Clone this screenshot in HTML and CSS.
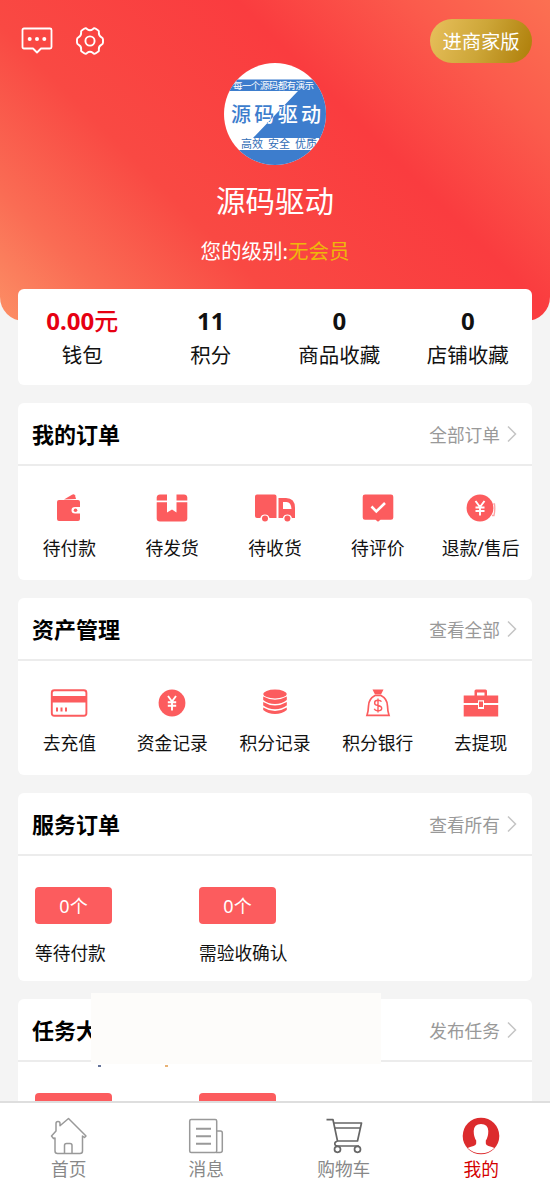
FILE: index.html
```html
<!DOCTYPE html>
<html lang="zh-CN">
<head>
<meta charset="utf-8">
<title>我的</title>
<link rel="stylesheet" href="styles.css">
</head>
<body>
<div class="screen">
  <header class="hero">
    <div class="topbar">
      <div class="tools">
        <svg width="32" height="28" viewBox="0 0 32 28" fill="none" stroke="#fff" stroke-width="1.8" stroke-linejoin="round"><path d="M3 1.500h26q1.500 0 1.500 1.500v17q0 1.500-1.500 1.500h-9l-4 4-4-4H3q-1.500 0-1.500-1.500V3Q1.500 1.500 3 1.500z"/><g fill="#fff" stroke="none"><circle cx="8.700" cy="12" r="2"/><circle cx="16" cy="12" r="2"/><circle cx="23.300" cy="12" r="2"/></g></svg>
        <svg width="28" height="28" viewBox="0 0 28 28" fill="none" stroke="#fff" stroke-width="1.900" stroke-linejoin="round"><path d="M8.600 1.500Q10 .8 11.200 2.200Q14 4.200 16.800 2.200Q18 .8 19.400 1.500L22 3.200Q23.300 4 22.800 5.800Q22.800 9 25.600 10.300Q27 11 27 12.500V15.500Q27 17 25.600 17.700Q22.800 19 22.800 22.200Q23.300 24 22 24.800L19.400 26.500Q18 27.200 16.800 25.800Q14 23.800 11.200 25.800Q10 27.200 8.600 26.500L6 24.800Q4.700 24 5.200 22.200Q5.200 19 2.400 17.700Q1 17 1 15.500V12.500Q1 11 2.400 10.300Q5.200 9 5.200 5.800Q4.700 4 6 3.200Z"/><circle cx="14" cy="14" r="4.600"/></svg>
      </div>
      <div class="merchant">进商家版</div>
    </div>
    <div class="avatar">
      <svg width="102" height="102" viewBox="0 0 102 102">
        <defs><clipPath id="dark"><path d="M74 28H102V75H29z"/></clipPath><clipPath id="light"><path d="M0 28H74L29 75H0z"/></clipPath></defs>
        <rect width="102" height="102" fill="#fff"/>
        <path d="M0 16.500H102V28H0zM74 28H102V75H29zM0 87H102V102H0zM95 75h7v13h-7z" fill="#3d7dcd"/>
        <g class="logo-text">
          <text x="9" y="26" font-size="9.500" textLength="81" fill="#fff">每一个源码都有演示</text>
          <g font-size="20" font-weight="500"><text x="7" y="59" textLength="90" fill="#3d7dcd" clip-path="url(#light)">源码驱动</text><text x="7" y="59" textLength="90" fill="#fff" clip-path="url(#dark)">源码驱动</text></g>
          <g font-size="11" fill="#2f6cb5"><text x="17" y="85">高效</text><text x="44" y="85">安全</text><text x="71" y="85">优质</text></g>
        </g>
      </svg>
    </div>
    <div class="name">源码驱动</div>
    <div class="level">您的级别:<span>无会员</span></div>
  </header>

  <main class="content">
    <section class="card stats">
      <div class="stat stat-money"><b>0.00<em>元</em></b><span>钱包</span></div>
      <div class="stat"><b>11</b><span>积分</span></div>
      <div class="stat"><b>0</b><span>商品收藏</span></div>
      <div class="stat"><b>0</b><span>店铺收藏</span></div>
    </section>

    <section class="card">
      <div class="card-head"><h2>我的订单</h2><a>全部订单<svg width="10" height="18" viewBox="0 0 10 18"><path d="M1 1.500L8.500 9L1 16.500"/></svg></a></div>
      <div class="grid">
        <div class="item"><svg width="26" height="30" viewBox="0 0 26 30"><path d="M8 6.500L16 1.700q2-1 3 .6l1 3.700z" fill="#fc5c5e"/><path d="M3 7H22q2 0 2 2v5h-5q-3.500 0-3.500 3.200t3.500 3.200h5V26q0 2-2 2H3Q1 28 1 26V9Q1 7 3 7z" fill="#fc5c5e"/><circle cx="19.500" cy="17.200" r="1.800" fill="#fc5c5e"/></svg><span>待付款</span></div>
        <div class="item"><svg width="32" height="30" viewBox="0 0 32 30"><path d="M4 1.500H11V7.500H.7V4.500Q1 1.500 4 1.500zM20.500 1.500H28Q31 1.500 31.300 4.500V7.500H20.500zM.7 9.200H11V19.500L16 16.500L20.500 19.500V9.200H31.300V25.500Q31.300 28.500 28 28.500H4Q.7 28.500 .7 25.500z" fill="#fc5c5e"/></svg><span>待发货</span></div>
        <div class="item"><svg width="42" height="30" viewBox="0 0 42 30"><path d="M3 1.500H20.500q2 0 2 2V25H15.500a4.800 4.800 0 0 0-9.200 0H3q-2 0-2-2V3.500q0-2 2-2zM24.500 5H32Q41 5 41 15V25H38a4.800 4.800 0 0 0-9.200 0H24.500z" fill="#fc5c5e"/><path d="M29 9H32.500Q37 9 37.500 16H29z" fill="#fff"/><circle cx="11" cy="25.500" r="3" fill="#fc5c5e"/><circle cx="33.400" cy="25.500" r="3" fill="#fc5c5e"/></svg><span>待收货</span></div>
        <div class="item"><svg width="32" height="30" viewBox="0 0 32 30"><path d="M3 1.500H29q2.300 0 2.300 2.300V24.500q0 2.300-2.300 2.300H18.500L16 28.800L13.500 26.800H3Q.7 26.800 .7 24.500V3.800Q.7 1.500 3 1.500z" fill="#fc5c5e"/><path d="M9.500 13.500L14.300 18.500L23 10" fill="none" stroke="#fff" stroke-width="2.600"/></svg><span>待评价</span></div>
        <div class="item"><svg width="32" height="30" viewBox="0 0 32 30"><path d="M28.300 11H29.500Q30.300 17 29 22.500H27" fill="none" stroke="#fda2a3" stroke-width="1.300"/><circle cx="15" cy="15" r="13.400" fill="#fc5c5e"/><path d="M10.500 8L15 14L19.500 8M15 14V22.500M10.500 14.500H19.500M10.500 18H19.500" fill="none" stroke="#fff" stroke-width="1.900"/></svg><span>退款/售后</span></div>
      </div>
    </section>

    <section class="card">
      <div class="card-head"><h2>资产管理</h2><a>查看全部<svg width="10" height="18" viewBox="0 0 10 18"><path d="M1 1.500L8.500 9L1 16.500"/></svg></a></div>
      <div class="grid">
        <div class="item"><svg width="38" height="30" viewBox="0 0 38 30"><rect x="1.800" y="2.300" width="34.600" height="25.400" rx="2.500" fill="#fff" stroke="#fc5c5e" stroke-width="1.900"/><path d="M2 8H36V14.500H2zM6 19.500h2v4H6zM10.500 19.500h2v4h-2zM15 19.500h2v4h-2z" fill="#fc5c5e"/></svg><span>去充值</span></div>
        <div class="item"><svg width="30" height="30" viewBox="0 0 30 30"><circle cx="15" cy="15" r="13.400" fill="#fc5c5e"/><path d="M11 8L15 13.500L19 8M15 13.500V22.500M10.800 14.200H19.200M10.800 17.800H19.200" fill="none" stroke="#fff" stroke-width="1.900"/></svg><span>资金记录</span></div>
        <div class="item"><svg width="26" height="30" viewBox="0 0 26 30" fill="#fc5c5e"><ellipse cx="13" cy="6" rx="11.800" ry="4.400"/><path d="M1.200 8.500Q13 15 24.800 8.500V12Q20 16 13 16T1.200 12zM1.200 14Q13 21 24.800 14V17.500Q20 21.200 13 21.200T1.200 17.500zM1.200 19.500Q13 26.500 24.800 19.500V22Q20 26 13 26T1.200 22z"/></svg><span>积分记录</span></div>
        <div class="item"><svg width="26" height="30" viewBox="0 0 26 30"><path d="M7.500 1.500H18.500L16 6.500H10z" fill="#fc5c5e"/><path d="M10 7.500H16Q22.500 11 22.500 18Q22.700 24 24 27.300H2Q3.300 24 3.500 18Q3.500 11 10 7.500z" fill="#fff" stroke="#fc5c5e" stroke-width="1.700"/><path d="M16.500 13.700Q15.500 12.300 13 12.300Q9.600 12.300 9.600 14.900Q9.600 17 13 17.500Q16.700 18 16.700 20.300Q16.700 22.800 13 22.800Q10 22.800 9.300 20.800M13 10.500V24.500" fill="none" stroke="#fc5c5e" stroke-width="1.400"/></svg><span>积分银行</span></div>
        <div class="item"><svg width="36" height="30" viewBox="0 0 36 30"><path d="M.7 7.500H11.500V3Q11.500 1.500 13 1.500H22.500Q24 1.500 24 3V7.500H35.200V15H21V12.300H15V15H.7zM.7 17H15V21H21V17H35.200V28.500H.7z" fill="#fc5c5e"/><path d="M14 4.500H21.500V7.500H14z" fill="#fff"/><rect x="16" y="13.500" width="4" height="5.500" fill="#fc5c5e"/></svg><span>去提现</span></div>
      </div>
    </section>

    <section class="card service">
      <div class="card-head"><h2>服务订单</h2><a>查看所有<svg width="10" height="18" viewBox="0 0 10 18"><path d="M1 1.500L8.500 9L1 16.500"/></svg></a></div>
      <div class="counts">
        <div class="count"><b>0个</b><span>等待付款</span></div>
        <div class="count"><b>0个</b><span>需验收确认</span></div>
      </div>
    </section>

    <section class="card service tasks">
      <div class="card-head"><h2>任务大厅</h2><a>发布任务<svg width="10" height="18" viewBox="0 0 10 18"><path d="M1 1.500L8.500 9L1 16.500"/></svg></a></div>
      <div class="counts">
        <div class="count"><b></b></div>
        <div class="count"><b></b></div>
      </div>
      <div class="mask"><i class="speck speck-blue"></i><i class="speck speck-orange"></i></div>
    </section>
  </main>

  <nav class="tabs">
    <div class="tab"><svg width="38" height="38" viewBox="0 0 38 38" fill="none" stroke="#999" stroke-width="1.500" stroke-linejoin="round"><path d="M6 10V6.500Q6 4.500 8 4.500Q10 4.500 10 6.500V8.800L18.500 1.500L36 19L34.500 20.500L32.500 19V34Q32.500 36.500 30 36.500H7.500Q5 36.500 5 34V21L3.500 21.500L1.500 19L6 14z"/><path d="M14.500 36V28.500Q14.500 26.500 16.500 26.500H20Q22 26.500 22 28.500V36"/></svg><span>首页</span></div>
    <div class="tab"><svg width="36" height="38" viewBox="0 0 36 38" fill="none" stroke="#999" stroke-width="1.500" stroke-linejoin="round"><rect x="1.700" y="2.500" width="27" height="33" rx="1.500"/><path d="M29 14H32.500Q34.300 14 34.300 16V33.500Q34.300 35.500 32 35.500H28"/><path d="M8 11.800H23M8 19.300H23M8 26.800H23" stroke-width="1.900"/></svg><span>消息</span></div>
    <div class="tab"><svg width="38" height="38" viewBox="0 0 38 38" fill="none" stroke="#666" stroke-width="1.700" stroke-linejoin="round"><path d="M1.500 2.700H8L12.500 24H32.500L36.500 6H9M10 11H35M12.500 24Q9.500 25 9.800 27Q10 29 13 29H34"/><circle cx="12.500" cy="32.300" r="3"/><circle cx="32.500" cy="32.300" r="3"/></svg><span>购物车</span></div>
    <div class="tab active"><svg width="38" height="38" viewBox="0 0 38 38"><circle cx="19" cy="19" r="18.300" fill="#dc2b2d"/><path d="M19 7Q26 7 26.300 14Q26.300 20 23.800 23.500V26.500Q24 28.300 26.500 29Q30.500 30 32.300 31Q27 36.300 19 36.300T5.700 31Q7.500 30 11.500 29Q14 28.300 14.200 26.500V23.500Q11.700 20 11.700 14Q12 7 19 7z" fill="#fff"/></svg><span>我的</span></div>
  </nav>
</div>
</body>
</html>
```
FILE: styles.css
```css
* { box-sizing: border-box; }
body {
  margin: 0;
  font-family: "Noto Sans", "Noto Sans CJK SC", sans-serif;
  color: #111;
}
svg { display: block; flex: none; }
.screen {
  display: flex;
  flex-direction: column;
  width: 550px;
  height: 1191px;
  overflow: hidden;
  background: #f4f4f4;
}
.hero {
  flex: none;
  display: flex;
  flex-direction: column;
  align-items: center;
  height: 321px;
  padding-top: 19px;
  border-radius: 0 0 24px 24px;
  background: linear-gradient(45deg, #fc8f65 0%, #fa6c54 15%, #f94943 34%, #fa3c3f 64%, #fb5b4c 84%, #fb7052 100%);
  color: #fff;
}
.topbar {
  display: flex;
  justify-content: space-between;
  align-items: center;
  align-self: stretch;
  height: 44px;
  padding: 0 18px 0 21px;
}
.tools { display: flex; gap: 23px; }
.merchant {
  width: 102px;
  height: 44px;
  border-radius: 22px;
  background: linear-gradient(110deg, #e8c05c, #cda638 50%, #ad7d08);
  font-size: 19.300px;
  line-height: 45px;
  text-align: center;
}
.avatar { width: 102px; height: 102px; border-radius: 50%; overflow: hidden; }
.logo-text { font-family: "Noto Sans CJK SC", sans-serif; }
.name { margin-top: 16px; font-size: 29.500px; line-height: 40px; }
.level { margin-top: 15px; font-size: 20.500px; line-height: 30px; }
.level span { color: #efb70b; }
.content {
  flex: 1;
  min-height: 0;
  display: flex;
  flex-direction: column;
  gap: 18px;
  margin-top: -32px;
  padding: 0 18px;
}
.card {
  flex: none;
  height: 177px;
  border-radius: 6px;
  background: #fff;
}
.stats {
  display: grid;
  grid-template-columns: repeat(4, 1fr);
  height: 96px;
  padding-top: 15px;
}
.stat { display: flex; flex-direction: column; align-items: center; }
.stat b { font-size: 24px; line-height: 34px; font-weight: 700; }
.stat em { font-style: normal; font-weight: 500; }
.stat span { margin-top: 1px; font-size: 20.500px; line-height: 32px; }
.stat-money b { color: #e60012; }
.card-head {
  display: flex;
  justify-content: space-between;
  align-items: center;
  height: 63px;
  padding: 1px 15px 0 14px;
  border-bottom: 2px solid #ececec;
}
.card-head h2 { margin: 0; font-size: 22px; line-height: 30px; color: #000; }
.card-head a { display: flex; align-items: center; gap: 7px; font-size: 17.700px; color: #999; }
.card-head path { fill: none; stroke: #c4c4c4; stroke-width: 1.500; }
.grid { display: grid; grid-template-columns: repeat(5, 1fr); padding-top: 27px; }
.item { display: flex; flex-direction: column; align-items: center; }
.item span { margin-top: 12px; font-size: 17.800px; line-height: 26px; white-space: nowrap; }
.service { height: 188px; }
.counts { display: grid; grid-template-columns: 164px 164px; padding: 31px 17px 0; }
.count b {
  display: block;
  width: 77px;
  height: 37px;
  border-radius: 4px;
  background: #fc5c5e;
  color: #fff;
  font-size: 18px;
  font-weight: 400;
  line-height: 38px;
  text-align: center;
}
.count span { display: block; margin-top: 16px; font-size: 17.700px; line-height: 26px; }
.tasks { position: relative; }
.mask {
  position: absolute;
  left: 73px;
  top: -6px;
  width: 290px;
  height: 71px;
  background: #fdfcfa;
}
.speck { position: absolute; bottom: -3px; width: 3px; height: 2px; }
.speck-blue { left: 7px; background: #66749a; }
.speck-orange { left: 74px; background: #e9b376; }
.tabs {
  flex: none;
  position: relative;
  display: grid;
  grid-template-columns: repeat(4, 1fr);
  height: 90px;
  padding-top: 14px;
  border-top: 2px solid #dedede;
  background: #fff;
}
.tab { display: flex; flex-direction: column; align-items: center; color: #888; }
.tab span { margin-top: 1px; font-size: 17.700px; line-height: 26px; }
.tab.active { color: #d40000; }
```
